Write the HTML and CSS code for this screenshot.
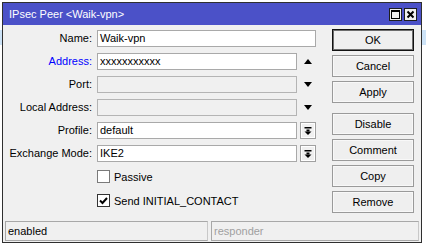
FILE: index.html
```html
<!DOCTYPE html>
<html>
<head>
<meta charset="utf-8">
<link rel="stylesheet" href="styles.css">
</head>
<body>
<div class="window">
  <div class="titlebar">
    <span class="title">IPsec Peer &lt;Waik-vpn&gt;</span>
    <div class="tbtns">
      <span class="tbtn"><svg width="11" height="11" viewBox="0 0 11 11"><rect x="1.5" y="1.5" width="8" height="8" fill="none" stroke="#000" stroke-width="1"/><rect x="1" y="1" width="9" height="2" fill="#000"/></svg></span>
      <span class="tbtn"><svg width="11" height="11" viewBox="0 0 11 11"><path d="M2.5 2.5 L8.5 8.5 M8.5 2.5 L2.5 8.5" stroke="#000" stroke-width="2"/></svg></span>
    </div>
  </div>
  <div class="main">
    <div class="form">
      <div class="lbl">Name:</div>
      <div class="field wide">Waik-vpn</div>

      <div class="lbl blue">Address:</div>
      <div class="field">xxxxxxxxxxx</div>
      <div class="aux"><svg class="tri" width="8" height="5" viewBox="0 0 8 5"><polygon points="0,5 8,5 4,0" fill="#000"/></svg></div>

      <div class="lbl">Port:</div>
      <div class="field disabled"></div>
      <div class="aux"><svg class="tri" width="8" height="5" viewBox="0 0 8 5"><polygon points="0,0 8,0 4,5" fill="#000"/></svg></div>

      <div class="lbl">Local Address:</div>
      <div class="field disabled"></div>
      <div class="aux"><svg class="tri" width="8" height="5" viewBox="0 0 8 5"><polygon points="0,0 8,0 4,5" fill="#000"/></svg></div>

      <div class="lbl">Profile:</div>
      <div class="field">default</div>
      <div class="aux"><span class="ddbtn"><svg width="14" height="14" viewBox="0 0 14 14"><rect x="3.5" y="3" width="7" height="1.5" fill="#000"/><rect x="5.5" y="5.5" width="3" height="2" fill="#000"/><polygon points="3.5,7.5 10.5,7.5 7,11" fill="#000"/></svg></span></div>

      <div class="lbl">Exchange Mode:</div>
      <div class="field">IKE2</div>
      <div class="aux"><span class="ddbtn"><svg width="14" height="14" viewBox="0 0 14 14"><rect x="3.5" y="3" width="7" height="1.5" fill="#000"/><rect x="5.5" y="5.5" width="3" height="2" fill="#000"/><polygon points="3.5,7.5 10.5,7.5 7,11" fill="#000"/></svg></span></div>

      <div></div>
      <div class="check"><span class="box"></span>Passive</div>

      <div></div>
      <div class="check second"><span class="box on"><svg width="11" height="11" viewBox="0 0 11 11"><path d="M2 5.5 L4.5 8 L9 3" fill="none" stroke="#000" stroke-width="2"/></svg></span>Send INITIAL_CONTACT</div>
    </div>
    <div class="buttons">
      <div class="btn default">OK</div>
      <div class="btn">Cancel</div>
      <div class="btn">Apply</div>
      <div class="btn group">Disable</div>
      <div class="btn">Comment</div>
      <div class="btn">Copy</div>
      <div class="btn">Remove</div>
    </div>
  </div>
  <div class="status">
    <div class="panel left">enabled</div>
    <div class="panel right dim">responder</div>
  </div>
</div>
</body>
</html>
```

FILE: styles.css
```css
* { box-sizing: border-box; }
html, body { margin: 0; padding: 0; }
body {
  width: 426px;
  height: 251px;
  overflow: hidden;
  background: linear-gradient(to bottom, #ffffff 0, #ffffff 30px, #cde3f7 30px, #cde3f7 45px, #ffffff 45px);
  font-family: "Liberation Sans", Arial, sans-serif;
  font-size: 11px;
  color: #000;
}
.window {
  margin: 2px 0 0 2px;
  width: 420px;
  height: 241px;
  border: 1px solid #2f2f2f;
  background: #f0f0f0;
  display: flex;
  flex-direction: column;
}
.titlebar {
  height: 22px;
  background: #4b51c8;
  display: flex;
  align-items: center;
  padding: 0 4px 0 6px;
  flex: none;
}
.title {
  color: #fff;
  font-size: 11px;
  flex: 1;
}
.tbtns {
  display: flex;
  gap: 2px;
}
.tbtn {
  width: 13px;
  height: 13px;
  background: #f0f0f0;
  border: 1px solid #1e1e1e;
  display: flex;
  align-items: center;
  justify-content: center;
}
.tbtn svg { display: block; }
.main {
  flex: 1;
  display: flex;
  padding-top: 4px;
}
.form {
  display: grid;
  grid-template-columns: 94px 200px 19px;
  grid-auto-rows: 17px;
  row-gap: 6px;
  margin-top: 1px;
  align-content: start;
}
.lbl {
  text-align: right;
  padding-right: 5px;
  line-height: 17px;
  white-space: nowrap;
}
.lbl.blue { color: #0000ff; }
.field {
  height: 17px;
  background: #fff;
  border: 1px solid #a9a9a9;
  padding-left: 2px;
  line-height: 15px;
  white-space: nowrap;
  overflow: hidden;
}
.field.wide { grid-column: 2 / span 2; }
.field.disabled {
  background: #f0f0f0;
  border-color: #b4b4b4;
}
.aux {
  display: flex;
  justify-content: flex-end;
  align-items: center;
}
.tri {
  display: block;
  margin-right: 4px;
}
.ddbtn {
  width: 16px;
  height: 17px;
  border: 1px solid #a0a0a0;
  background: #f0f0f0;
  box-shadow: inset 0 0 0 1px #fff;
  display: flex;
  align-items: center;
  justify-content: center;
}
.ddbtn svg { display: block; }
.check {
  grid-column: 2 / span 2;
  display: flex;
  align-items: center;
  gap: 4px;
  white-space: nowrap;
}
.check.second { margin-top: 2px; }
.box {
  width: 13px;
  height: 13px;
  border: 1px solid #7a7a7a;
  background: #fff;
  display: flex;
  align-items: center;
  justify-content: center;
}
.box.on { border-color: #333; }
.box svg { display: block; }
.buttons {
  margin-left: 16px;
  width: 82px;
  display: flex;
  flex-direction: column;
  gap: 4px;
}
.btn {
  height: 22px;
  border: 1px solid #9a9a9a;
  background: #efefef;
  box-shadow: inset 0 0 0 1px #f8f8f8;
  text-align: center;
  line-height: 20px;
}
.btn.default {
  border: 1px solid #111;
  box-shadow: inset 0 0 0 1px #6d6d6d;
}
.btn.group { margin-top: 6px; }
.status {
  flex: none;
  height: 20px;
  margin: 0 2px 1px 2px;
  display: flex;
  gap: 3px;
}
.panel {
  border: 1px solid #a8a8a8;
  border-right-color: #c8c8c8;
  line-height: 18px;
  padding-left: 2px;
  white-space: nowrap;
}
.panel.left { width: 203px; }
.panel.right { flex: 1; }
.panel.dim { color: #a0a0a0; }
```
